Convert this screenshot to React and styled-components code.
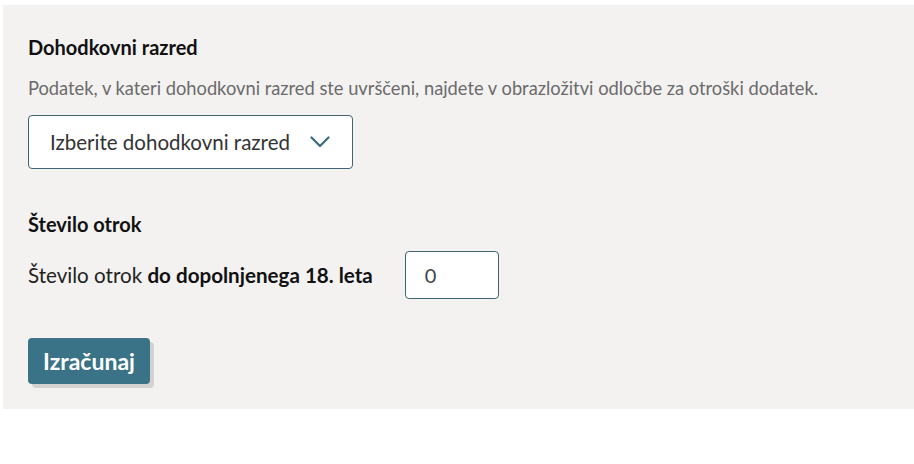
import React from 'react'
import styled, { createGlobalStyle } from 'styled-components'

const GlobalStyle = createGlobalStyle`
body {
  margin: 0;
  background: #fff;
  font-family: Lato, "Noto Sans", sans-serif;
  color: #1a1a1a;
}
`

const Page = styled.div`
padding: 5px 0 0 3px;
`
const Panel = styled.div`
background-color: #f3f2f1;
padding: 30px 25px 25px 25px;
height: 404px;
box-sizing: border-box;
display: flex;
flex-direction: column;
`
const Title = styled.h2`
margin: 0;
font-size: 20px;
font-weight: 700;
line-height: 24px;
color: #111;
`
const Hint = styled.p`
margin: 17px 0 0 0;
font-size: 18.3px;
line-height: 24px;
color: #6b6b6b;
`
const Select = styled.button`
margin-top: 15px;
width: 325px;
height: 54px;
box-sizing: border-box;
display: flex;
align-items: center;
justify-content: space-between;
padding: 0 22px 0 21px;
background: #fff;
border: 1px solid #3f6475;
border-radius: 4px;
font-family: inherit;
font-size: 20.5px;
color: #333;
cursor: pointer;
`
const Section = styled.div`
margin-top: ${(p) => p.$top}px;
`
const Row = styled.div`
margin-top: 15px;
display: flex;
align-items: center;
gap: 32px;
font-size: 20.6px;
color: #222;
`
const Label = styled.span`
b { font-weight: 700; color: #111; }
`
const NumberInput = styled.input`
width: 94px;
height: 48px;
box-sizing: border-box;
border: 1px solid #3f6475;
border-radius: 4px;
padding: 0 19px;
font-family: inherit;
font-size: 20px;
color: #444;
background: #fff;
`
const Button = styled.button`
margin-top: 39px;
align-self: flex-start;
height: 46px;
width: 122px;
padding: 0;
border: none;
border-radius: 4px;
background-color: #3a7287;
color: #fff;
font-family: inherit;
font-size: 23px;
font-weight: 700;
box-shadow: 4px 4px 0 #d3d2d0;
cursor: pointer;
`

const Chevron = () => (
  <svg width="20" height="12" viewBox="0 0 20 12" fill="none">
    <path d="M1.5 1.5 L10 10 L18.5 1.5" stroke="#3b6a7f" strokeWidth="2.2" strokeLinecap="round" strokeLinejoin="round" />
  </svg>
)

const App = () => {
  return (
    <Page>
      <GlobalStyle />
      <Panel>
        <Title>Dohodkovni razred</Title>
        <Hint>Podatek, v kateri dohodkovni razred ste uvrščeni, najdete v obrazložitvi odločbe za otroški dodatek.</Hint>
        <Select type="button">
          Izberite dohodkovni razred
          <Chevron />
        </Select>
        <Section $top={43}>
          <Title>Število otrok</Title>
          <Row>
            <Label>Število otrok <b>do dopolnjenega 18. leta</b></Label>
            <NumberInput defaultValue="0" />
          </Row>
        </Section>
        <Button>Izračunaj</Button>
      </Panel>
    </Page>
  )
}

export default App
